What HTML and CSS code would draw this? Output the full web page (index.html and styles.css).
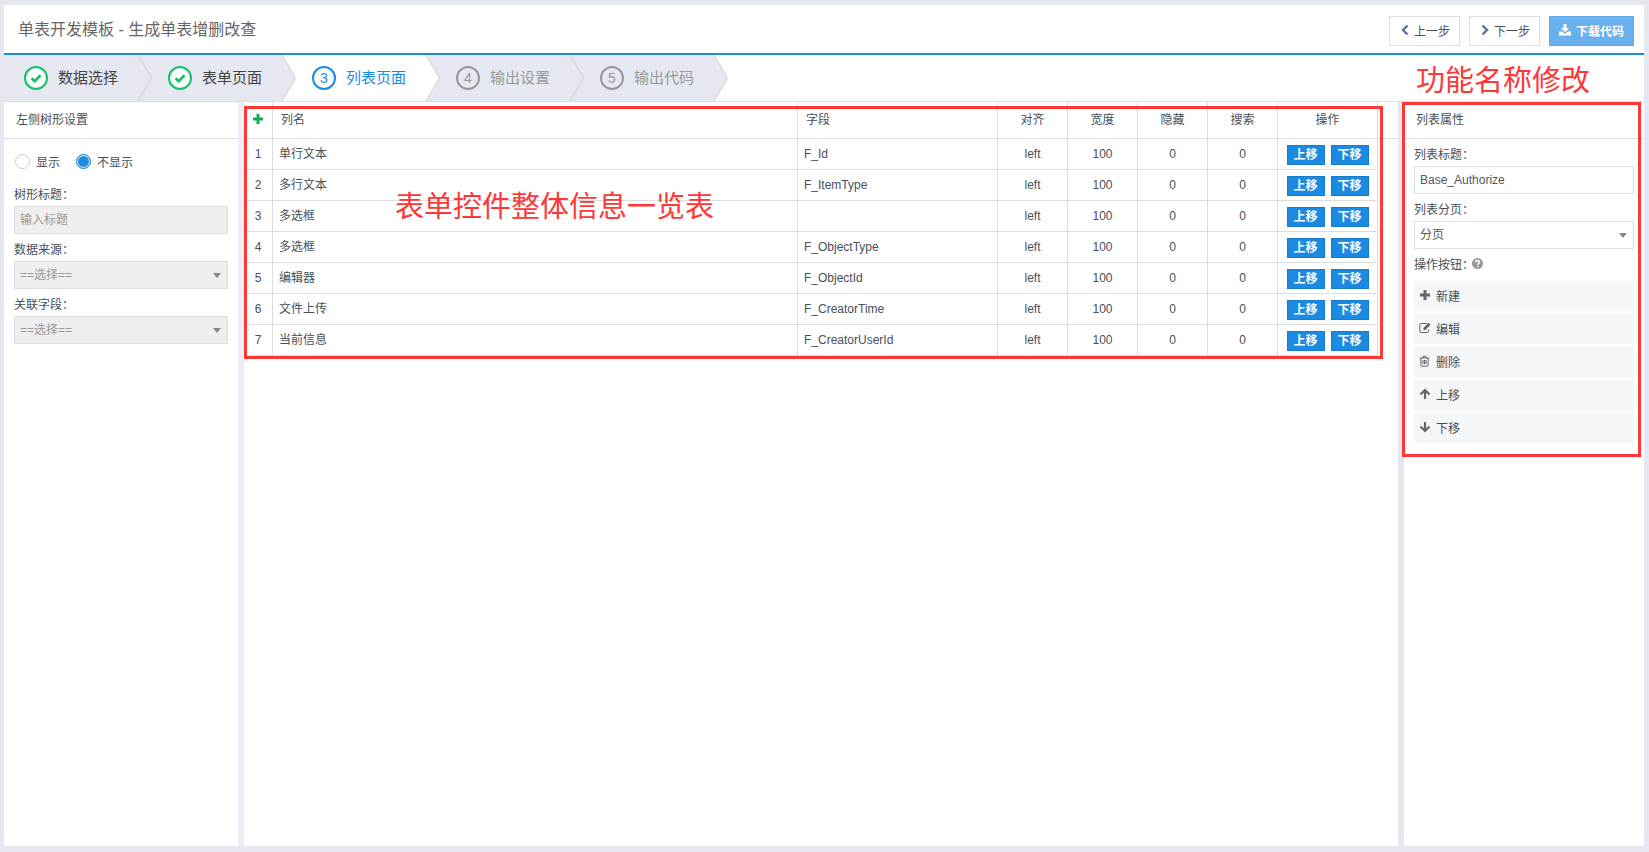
FILE: index.html
```
<!DOCTYPE html>
<html lang="zh-CN">
<head>
  <meta charset="UTF-8" />
  <meta name="viewport" content="width=device-width, initial-scale=1.0"/>
  <title>单表开发模板</title>
  <link rel="stylesheet" href="styles.css">
</head>
<body>
  <header class="header">
    <h1 class="title">单表开发模板 - 生成单表增删改查</h1>
    <div class="actions">
      <button type="button" class="btn">
        <svg class="icon icon-nav" viewBox="0 0 12 12"><path d="M8.5 1.5 4 6l4.500 4.500" /></svg>上一步
      </button>
      <button type="button" class="btn">
        <svg class="icon icon-nav" viewBox="0 0 12 12"><path d="M3.500 1.500 8 6l-4.500 4.500" /></svg>下一步
      </button>
      <button type="button" class="btn btn-primary">
        <svg class="icon" viewBox="0 0 12 12"><path d="M4.500 0h3v4h2.700L6 8.200 1.800 4h2.700zM0 7.500h3.300L6 10l2.700-2.500H12v4H0z" /></svg>下载代码
      </button>
    </div>
  </header>

  <nav class="steps-bar">
    <ol class="steps">
      <li class="step done">
        <span class="chevron"><svg viewBox="0 0 12 12"><path d="M1.500 6.200 4.700 9.200 10.500 3.200" /></svg></span>数据选择
        <svg class="arrow" viewBox="0 0 14 46"><path d="M0 0 13.500 23 0 46" /></svg>
      </li>
      <li class="step done">
        <span class="chevron"><svg viewBox="0 0 12 12"><path d="M1.500 6.200 4.700 9.200 10.500 3.200" /></svg></span>表单页面
        <svg class="arrow" viewBox="0 0 14 46"><path d="M0 0 13.500 23 0 46" /></svg>
      </li>
      <li class="step active">
        <span class="chevron">3</span>列表页面
        <svg class="arrow" viewBox="0 0 14 46"><path d="M0 0 13.500 23 0 46" /></svg>
      </li>
      <li class="step">
        <span class="chevron">4</span>输出设置
        <svg class="arrow" viewBox="0 0 14 46"><path d="M0 0 13.500 23 0 46" /></svg>
      </li>
      <li class="step">
        <span class="chevron">5</span>输出代码
        <svg class="arrow" viewBox="0 0 14 46"><path d="M0 0 13.500 23 0 46" /></svg>
      </li>
    </ol>
  </nav>

  <main class="content">
    <section class="panel panel-left">
      <h2 class="panel-title">左侧树形设置</h2>
      <div class="panel-body">
        <div class="radios">
          <label class="radio"><input type="radio" name="showTree" value="1" />显示</label>
          <label class="radio"><input type="radio" name="showTree" value="0" checked />不显示</label>
        </div>
        <label class="field-label" for="treeTitle">树形标题：</label>
        <input class="control" id="treeTitle" type="text" placeholder="输入标题" disabled />
        <label class="field-label" for="treeSource">数据来源：</label>
        <div class="select">
          <select class="control" id="treeSource" disabled><option>==选择==</option></select>
        </div>
        <label class="field-label" for="treeField">关联字段：</label>
        <div class="select">
          <select class="control" id="treeField" disabled><option>==选择==</option></select>
        </div>
      </div>
    </section>

    <section class="panel panel-center">
      <table class="grid">
        <colgroup>
          <col class="col-index"><col><col class="col-field"><col class="col-small"><col class="col-small">
          <col class="col-small"><col class="col-small"><col class="col-ops"><col class="col-rest">
        </colgroup>
        <thead>
          <tr>
            <th class="center"><button type="button" class="add" aria-label="添加"><svg viewBox="0 0 10 10"><path d="M3.500 0h3v3.500H10v3H6.500V10h-3V6.500H0v-3h3.500z" /></svg></button></th>
            <th>列名</th>
            <th>字段</th>
            <th class="center">对齐</th>
            <th class="center">宽度</th>
            <th class="center">隐藏</th>
            <th class="center">搜索</th>
            <th class="center">操作</th>
            <td class="rest"></td>
          </tr>
        </thead>
        <tbody>
          <tr>
            <td class="center">1</td><td>单行文本</td><td>F_Id</td>
            <td class="center">left</td><td class="center">100</td><td class="center">0</td><td class="center">0</td>
            <td><div class="ops"><button type="button">上移</button><button type="button">下移</button></div></td>
          </tr>
          <tr>
            <td class="center">2</td><td>多行文本</td><td>F_ItemType</td>
            <td class="center">left</td><td class="center">100</td><td class="center">0</td><td class="center">0</td>
            <td><div class="ops"><button type="button">上移</button><button type="button">下移</button></div></td>
          </tr>
          <tr>
            <td class="center">3</td><td>多选框</td><td></td>
            <td class="center">left</td><td class="center">100</td><td class="center">0</td><td class="center">0</td>
            <td><div class="ops"><button type="button">上移</button><button type="button">下移</button></div></td>
          </tr>
          <tr>
            <td class="center">4</td><td>多选框</td><td>F_ObjectType</td>
            <td class="center">left</td><td class="center">100</td><td class="center">0</td><td class="center">0</td>
            <td><div class="ops"><button type="button">上移</button><button type="button">下移</button></div></td>
          </tr>
          <tr>
            <td class="center">5</td><td>编辑器</td><td>F_ObjectId</td>
            <td class="center">left</td><td class="center">100</td><td class="center">0</td><td class="center">0</td>
            <td><div class="ops"><button type="button">上移</button><button type="button">下移</button></div></td>
          </tr>
          <tr>
            <td class="center">6</td><td>文件上传</td><td>F_CreatorTime</td>
            <td class="center">left</td><td class="center">100</td><td class="center">0</td><td class="center">0</td>
            <td><div class="ops"><button type="button">上移</button><button type="button">下移</button></div></td>
          </tr>
          <tr>
            <td class="center">7</td><td>当前信息</td><td>F_CreatorUserId</td>
            <td class="center">left</td><td class="center">100</td><td class="center">0</td><td class="center">0</td>
            <td><div class="ops"><button type="button">上移</button><button type="button">下移</button></div></td>
          </tr>
        </tbody>
      </table>
      <div class="mark mark-table"></div>
      <p class="note note-table">表单控件整体信息一览表</p>
    </section>

    <section class="panel panel-right">
      <h2 class="panel-title">列表属性</h2>
      <div class="panel-body">
        <label class="field-label" for="listTitle">列表标题：</label>
        <input class="control" id="listTitle" type="text" value="Base_Authorize" />
        <label class="field-label" for="listPage">列表分页：</label>
        <div class="select">
          <select class="control" id="listPage"><option>分页</option><option>不分页</option></select>
        </div>
        <div class="field-label">操作按钮：<svg class="help" viewBox="0 0 12 12"><circle cx="6" cy="6" r="6" /><path d="M4 4.700C4 3.300 4.900 2.700 6 2.700s2.100.700 2.100 1.800C8.100 5.900 6.200 5.800 6.200 7.300M6.200 8.400v1.400" /></svg></div>
        <ul class="tools">
          <li><button type="button"><svg class="icon" viewBox="0 0 12 12"><path d="M4.500 1h3v3.500H11v3H7.500V11h-3V7.500H1v-3h3.500z" /></svg>新建</button></li>
          <li><button type="button"><svg class="icon icon-line" viewBox="0 0 12 12"><path d="M8 1.500H2.200Q.8 1.500.8 2.900v6.200q0 1.400 1.400 1.400h6q1.400 0 1.400-1.400V7.500" /><path class="fill" d="M9.500.800l2 2L6.500 8H4.400V5.900z" /></svg>编辑</button></li>
          <li><button type="button"><svg class="icon icon-line" viewBox="0 0 12 12"><path d="M.800 3h9.400M3.500 3l.600-1.700h2.800L7.500 3M1.900 3v7.200q0 1 1 1h5.200q1 0 1-1V3M4 5v4.200M5.500 5v4.200M7 5v4.200" /></svg>删除</button></li>
          <li><button type="button"><svg class="icon icon-arrow" viewBox="0 0 12 12"><path d="M1.500 6.500 6 2l4.500 4.500M6 2.500V11" /></svg>上移</button></li>
          <li><button type="button"><svg class="icon icon-arrow" viewBox="0 0 12 12"><path d="M1.500 5.500 6 10l4.500-4.500M6 9.500V1" /></svg>下移</button></li>
        </ul>
      </div>
      <div class="mark mark-props"></div>
      <p class="note note-props">功能名称修改</p>
    </section>
  </main>
</body>
</html>
```

FILE: styles.css
```
* {
  box-sizing: border-box;
}
body {
  margin: 0;
  padding: 5px 5px 6px 4px;
  height: 100vh;
  display: flex;
  flex-direction: column;
  background: #e5e8f0;
  font-family: "Liberation Sans", "Noto Sans CJK SC", sans-serif;
  font-size: 12px;
  color: #474f59;
}
h1, h2, p, ol, ul {
  margin: 0;
  padding: 0;
  font-weight: normal;
  list-style: none;
}
button, input, select {
  font: inherit;
  color: inherit;
}
button {
  cursor: pointer;
}

/* header */
.header {
  display: flex;
  align-items: center;
  justify-content: space-between;
  height: 50px;
  padding: 0 10px 0 14px;
  background: #fff;
  border-bottom: 2px solid #1b8ae2;
}
.title {
  padding-top: 2px;
  font-size: 16px;
  line-height: 24px;
  color: #666;
}
.actions {
  display: flex;
  gap: 9px;
  padding-top: 4px;
}
.btn {
  display: flex;
  align-items: center;
  justify-content: center;
  gap: 3px;
  height: 30px;
  padding: 0 9px 2px;
  border: 1px solid #ddd;
  background: #fff;
  white-space: nowrap;
}
.btn-primary {
  gap: 5px;
  border-color: #62aae6;
  background: #69b1ec;
  color: #fff;
  font-weight: bold;
}
.icon {
  flex: none;
  width: 12px;
  height: 12px;
  fill: currentColor;
}
.icon-nav {
  fill: none;
  stroke: #64709a;
  stroke-width: 2.4;
}

/* steps */
.steps-bar {
  background: #fff;
  border-bottom: 1px solid #ddd;
}
.steps {
  display: flex;
}
.step {
  position: relative;
  display: flex;
  align-items: center;
  gap: 10px;
  width: 144px;
  height: 46px;
  padding-left: 30px;
  background: #e5e8f0;
  fill: #e5e8f0;
  font-size: 15px;
  line-height: 20px;
  color: #999;
  white-space: nowrap;
}
.step:first-child {
  width: 134px;
  padding-left: 20px;
}
.step.done {
  color: #444;
}
.step.active {
  background: #fff;
  fill: #fff;
  color: #1b8ae2;
}
.chevron {
  display: flex;
  align-items: center;
  justify-content: center;
  width: 24px;
  height: 24px;
  border: 2px solid currentColor;
  border-radius: 50%;
  background: #fff;
  font-size: 14px;
  line-height: 20px;
}
.step:not(.done):not(.active) .chevron {
  background: none;
}
.done .chevron {
  color: #14c063;
}
.chevron svg {
  width: 12px;
  height: 12px;
  fill: none;
  stroke: currentColor;
  stroke-width: 2.6;
}
.arrow {
  position: absolute;
  top: 0;
  left: 100%;
  z-index: 1;
  width: 14px;
  height: 46px;
  stroke: #ccc;
}

/* panels */
.content {
  flex: 1;
  display: flex;
  min-height: 0;
}
.panel {
  position: relative;
  background: #fff;
}
.panel-left {
  flex: none;
  width: 240px;
  border-right: 6px solid #ebeef4;
}
.panel-center {
  flex: 1;
  min-width: 0;
}
.panel-right {
  flex: none;
  width: 240px;
  margin-left: 6px;
}
.panel-title {
  height: 37px;
  padding-left: 12px;
  border-bottom: 1px solid #ddd;
  font-size: 12px;
  line-height: 36px;
}
.panel-body {
  padding: 0 10px;
}
.radios {
  display: flex;
  gap: 16px;
  height: 40px;
  padding: 4px 0 0 1px;
}
.radio {
  display: flex;
  align-items: center;
  gap: 6px;
}
.radio input {
  appearance: none;
  width: 15px;
  height: 15px;
  margin: 0;
  border: 1px solid #ccc;
  border-radius: 50%;
  background: #fff;
}
.radio input:checked {
  border-color: #1b8ae2;
  background: #1b8ae2;
  box-shadow: inset 0 0 0 1px #fff;
}
.field-label {
  display: flex;
  align-items: center;
  height: 27px;
  padding-top: 2px;
}
.control {
  display: block;
  width: 100%;
  height: 28px;
  padding: 0 5px;
  border: 1px solid #ddd;
  border-radius: 0;
  background: #fff;
  color: #555;
  outline: none;
  appearance: none;
}
.control:disabled {
  background: #eee;
  color: #999;
  opacity: 1;
}
.control::placeholder {
  color: #999;
}
.select {
  position: relative;
}
.select::after {
  content: "";
  position: absolute;
  top: 12px;
  right: 7px;
  border: 4px solid transparent;
  border-top: 5px solid #888;
  border-bottom: 0;
  pointer-events: none;
}
.help {
  width: 11px;
  height: 11px;
  margin-left: -2px;
  fill: #999;
}
.help path {
  fill: none;
  stroke: #fff;
  stroke-width: 1.6;
}
.tools {
  display: flex;
  flex-direction: column;
  gap: 3px;
  padding-top: 5px;
}
.tools button {
  display: flex;
  align-items: center;
  gap: 5px;
  width: 100%;
  height: 30px;
  padding: 0 5px 2px;
  border: 0;
  background: #f5f6f8;
}
.tools .icon {
  color: #666;
}
.tools .icon-line {
  fill: none;
  stroke: currentColor;
}
.icon-line .fill {
  fill: currentColor;
  stroke: none;
}
.tools .icon-arrow {
  fill: none;
  stroke: currentColor;
  stroke-width: 2.2;
}

/* table */
.grid {
  width: 100%;
  table-layout: fixed;
  border-collapse: separate;
  border-spacing: 0;
}
.col-index { width: 29px; }
.col-field { width: 200px; }
.col-small { width: 70px; }
.col-ops { width: 100px; }
.col-rest { width: 20px; }
.grid th,
.grid td {
  height: 31px;
  padding: 0 6px;
  border-right: 1px solid #ddd;
  border-bottom: 1px solid #ddd;
  text-align: left;
  font-weight: normal;
  line-height: 18px;
}
.grid th,
.grid .rest {
  height: 37px;
  padding: 0 8px;
}
.grid .center {
  padding-left: 0;
  padding-right: 0;
  text-align: center;
}
.grid .rest {
  border-right: 0;
}
.add {
  padding: 0;
  border: 0;
  background: none;
}
.add svg {
  display: block;
  width: 10px;
  height: 10px;
  fill: #0fac57;
}
.ops {
  display: flex;
  justify-content: center;
  gap: 6px;
  padding-top: 2px;
}
.ops button {
  width: 38px;
  height: 20px;
  padding: 0;
  border: 1px solid #187ccc;
  background: #1b8ae2;
  color: #fff;
  font-weight: bold;
  line-height: 18px;
}

/* red marks over the panels */
.mark {
  position: absolute;
  border: 3px solid #fe3737;
  pointer-events: none;
}
.mark-table {
  top: 4px;
  left: 0;
  right: 15px;
  height: 253px;
}
.mark-props {
  top: 0;
  left: -2px;
  right: 3px;
  height: 355px;
}
.note {
  position: absolute;
  font-size: 29px;
  line-height: 40px;
  color: #fe3737;
  white-space: nowrap;
}
.note-table {
  top: 85px;
  left: 151px;
}
.note-props {
  top: -41px;
  left: 12px;
}
```
